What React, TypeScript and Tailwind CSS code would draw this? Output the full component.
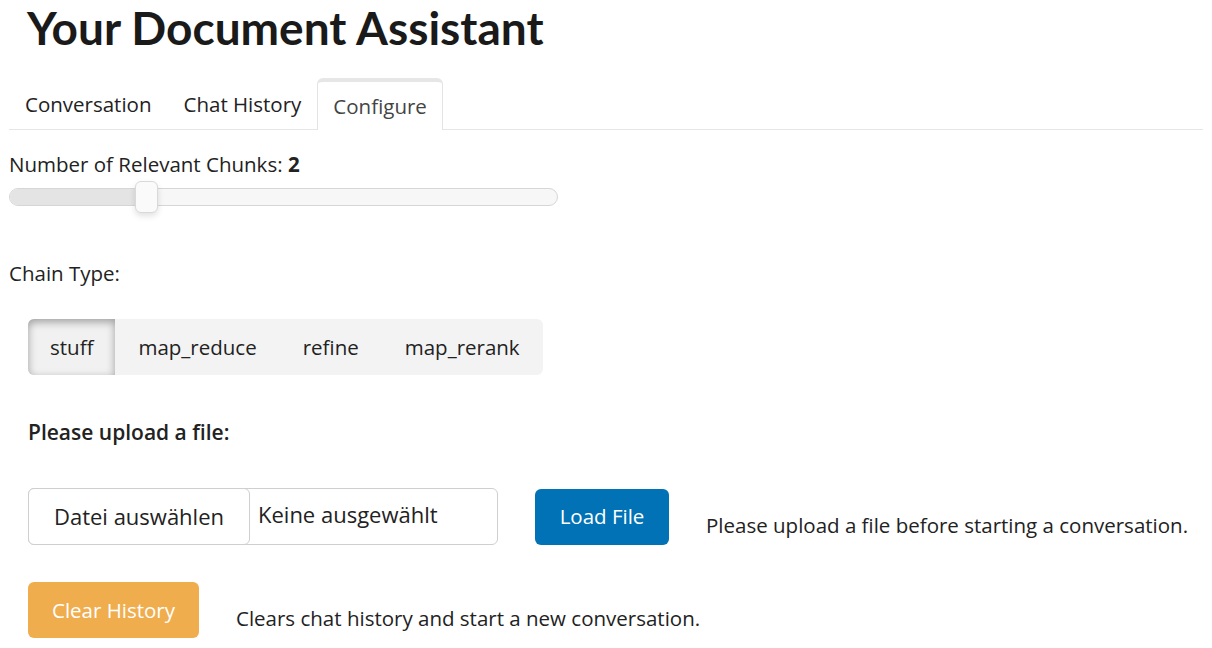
const font = { fontFamily: '"Open Sans", "Noto Sans", sans-serif' };

const Tabs = () => {
    return (
        <div className="flex flex-row items-end h-[52px] border-b border-[#e6e6e6] mx-[9px] text-[20.5px]">
            <div className="px-4 h-[50px] flex items-center text-[#222]">Conversation</div>
            <div className="px-4 h-[50px] flex items-center text-[#222]">Chat History</div>
            <div className="px-[15px] h-[52px] flex items-center text-[#444] bg-white border border-b-0 border-[#e3e3e3] border-t-4 border-t-[#e6e6e6] rounded-t-md -mb-px">
                Configure
            </div>
        </div>
    );
};

const Slider = () => {
    return (
        <div className="relative w-[549px] h-[32px] ml-[9px] flex items-center">
            <div className="w-full h-[18px] rounded-full border border-[#d6d6d6] bg-[#f7f7f7] overflow-hidden flex">
                <div className="w-[132px] h-full bg-[#e4e4e4]" />
            </div>
            <div className="absolute left-[126px] top-0 w-[23px] h-[32px] rounded-md border border-[#d9d9d9] bg-[#fafafa] shadow-[0_3px_6px_rgba(0,0,0,0.12)]" />
        </div>
    );
};

const ChainTypes = () => {
    const options = ["stuff", "map_reduce", "refine", "map_rerank"];
    return (
        <div className="ml-[28px] inline-flex h-[56px] rounded-md bg-[#f3f3f3] text-[20.5px] text-[#222]">
            {options.map((o, i) =>
                i === 0 ? (
                    <div key={o} className="px-[22px] h-full flex items-center justify-center rounded-l-md bg-[#f1f1f1] shadow-[inset_0_3px_8px_rgba(0,0,0,0.35)]">
                        {o}
                    </div>
                ) : (
                    <div key={o} className="px-[23px] h-full flex items-center justify-center">
                        {o}
                    </div>
                )
            )}
        </div>
    );
};

export default function App() {
    return (
        <div className="w-[1212px] h-[648px] bg-white text-[#222] overflow-hidden" style={font}>
            <h1
                className="pl-[27px] h-[78px] text-[46px] font-bold leading-[56px] text-[#1a1a1a]"
                style={{ fontFamily: 'Lato, "Open Sans", sans-serif' }}
            >
                Your Document Assistant
            </h1>

            <Tabs />

            <div className="pl-[9px] mt-[20px] h-[28px] flex items-center text-[20.5px] text-[#222]">
                Number of Relevant Chunks:&nbsp;<span className="font-bold">2</span>
            </div>

            <div className="mt-[3px]">
                <Slider />
            </div>

            <div className="pl-[9px] mt-[46px] h-[28px] flex items-center text-[20.5px] text-[#222]">Chain Type:</div>

            <div className="mt-[32px]">
                <ChainTypes />
            </div>

            <div className="pl-[28px] mt-[44px] h-[28px] flex items-center text-[21px] font-semibold text-[#222]">
                Please upload a file:
            </div>

            <div className="mt-[41px] pl-[28px] flex flex-row items-center h-[57px]">
                <div className="w-[470px] h-[57px] flex flex-row items-center border border-[#cfcfcf] rounded-md">
                    <div className="w-[222px] h-[57px] -ml-px flex items-center justify-center border border-[#cfcfcf] rounded-md text-[22px] text-[#222] bg-white">
                        Datei auswählen
                    </div>
                    <span className="ml-[8px] -mt-[4px] text-[22px] text-[#222]">Keine ausgewählt</span>
                </div>
                <button className="ml-[37px] w-[134px] h-[56px] rounded-md bg-[#0072b5] text-white text-[20.5px]">Load File</button>
                <span className="ml-[37px] mt-[17px] text-[20.5px] text-[#222]">Please upload a file before starting a conversation.</span>
            </div>

            <div className="mt-[37px] pl-[28px] flex flex-row items-center h-[56px]">
                <button className="w-[171px] h-[56px] rounded-md bg-[#f0ad4e] text-white text-[20.5px]">Clear History</button>
                <span className="ml-[37px] mt-[17px] text-[20.5px] text-[#222]">Clears chat history and start a new conversation.</span>
            </div>
        </div>
    );
}
